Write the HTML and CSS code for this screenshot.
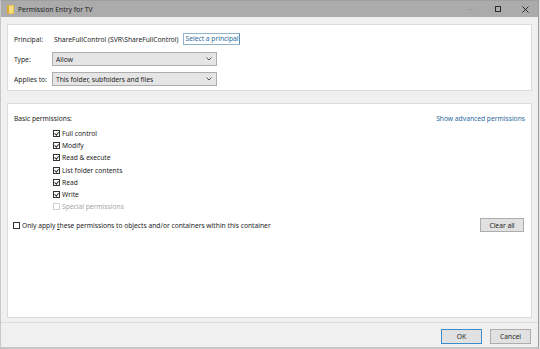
FILE: index.html
```html
<!DOCTYPE html>
<html lang="en">
<head>
  <meta charset="UTF-8" />
  <title>Permission Entry for TV</title>
  <link rel="stylesheet" href="styles.css">
</head>
<body>
  <div class="window">
    <div class="titlebar">
      <svg class="app-icon" width="7" height="9" viewBox="0 0 7 9" aria-hidden="true">
        <rect x="0" y="0" width="7" height="9" fill="#e8c252"/>
        <rect x="1" y="1" width="5" height="7" fill="#f6dc83"/>
        <rect x="0" y="0" width="2" height="9" fill="#d9a93a"/>
      </svg>
      <span class="title">Permission Entry for TV</span>
      <div class="controls">
        <span class="ctl ctl-min"></span>
        <span class="ctl ctl-max"></span>
        <svg class="ctl ctl-close" width="7" height="7" viewBox="0 0 7 7" aria-hidden="true">
          <path d="M0.5 0.5 L6.5 6.5 M6.5 0.5 L0.5 6.5" stroke="#2a2a2a" stroke-width="1"/>
        </svg>
      </div>
    </div>

    <div class="content">
      <section class="panel panel-head">
        <div class="row">
          <span class="label">Principal:</span>
          <span class="value">ShareFullControl (SVR\ShareFullControl)</span>
          <a class="link link-box">Select a principal</a>
        </div>
        <div class="row">
          <span class="label">Type:</span>
          <div class="select">
            <span>Allow</span>
            <svg class="chevron" width="6" height="4" viewBox="0 0 6 4" aria-hidden="true"><path d="M0.5 0.5 L3 3 L5.5 0.5" fill="none" stroke="#444" stroke-width="0.9"/></svg>
          </div>
        </div>
        <div class="row">
          <span class="label">Applies to:</span>
          <div class="select">
            <span>This folder, subfolders and files</span>
            <svg class="chevron" width="6" height="4" viewBox="0 0 6 4" aria-hidden="true"><path d="M0.5 0.5 L3 3 L5.5 0.5" fill="none" stroke="#444" stroke-width="0.9"/></svg>
          </div>
        </div>
      </section>

      <section class="panel panel-perms">
        <div class="perms-head">
          <span>Basic permissions:</span>
          <a class="link">Show advanced permissions</a>
        </div>
        <ul class="perm-list">
          <li><span class="box checked"></span><span>Full control</span></li>
          <li><span class="box checked"></span><span>Modify</span></li>
          <li><span class="box checked"></span><span>Read &amp; execute</span></li>
          <li><span class="box checked"></span><span>List folder contents</span></li>
          <li><span class="box checked"></span><span>Read</span></li>
          <li><span class="box checked"></span><span>Write</span></li>
          <li class="disabled"><span class="box"></span><span>Special permissions</span></li>
        </ul>
        <div class="apply-row">
          <span class="apply-label"><span class="box"></span><span>Only apply <u>t</u>hese permissions to objects and/or containers within this container</span></span>
          <button class="btn" type="button">Clear all</button>
        </div>
      </section>
    </div>

    <div class="footer">
      <button class="btn btn-default" type="button">OK</button>
      <button class="btn" type="button">Cancel</button>
    </div>
  </div>
</body>
</html>
```

FILE: styles.css
```css
:root {
  --color-window: #f0f0f0;
  --color-panel: #ffffff;
  --color-line: #dcdcdc;
  --color-text: #1e1e1e;
  --color-link: #2a6a9e;
  --font-ui: "Noto Sans", "Open Sans", sans-serif;
}

* {
  box-sizing: border-box;
}

body {
  margin: 0;
  background: #e6e6e6;
  font-family: var(--font-ui);
  font-size: 6.7px;
  color: var(--color-text);
}

.window {
  width: 539px;
  height: 349px;
  background: var(--color-window);
  border-left: 1px solid #c8c8c8;
  border-right: 1px solid #9c9c9c;
  border-bottom: 2px solid #c6c6c6;
  display: flex;
  flex-direction: column;
}

/* title bar */
.titlebar {
  height: 17px;
  flex: none;
  background: #ababab;
  border-top: 1px solid #9f9f9f;
  display: flex;
  align-items: center;
  padding-left: 6px;
}

.app-icon {
  flex: none;
  margin-top: 1px;
}

.title {
  margin-left: 4px;
  font-size: 6.8px;
  color: #1c1c1c;
}

.controls {
  margin-left: auto;
  display: flex;
  align-items: center;
  height: 100%;
}

.ctl {
  display: block;
}

.ctl-min {
  width: 5px;
  height: 1px;
  background: #9a9a9a;
  margin-right: 22px;
}

.ctl-max {
  width: 6px;
  height: 6px;
  border: 1px solid #2a2a2a;
  margin-right: 21px;
}

.ctl-close {
  margin-right: 9px;
}

/* content */
.content {
  flex: 1;
  display: flex;
  flex-direction: column;
  gap: 12px;
  padding: 7px 6px 4px 6px;
}

.panel {
  background: var(--color-panel);
  border: 1px solid var(--color-line);
}

.panel-head {
  height: 67px;
  padding: 7px 6px 4px;
  display: flex;
  flex-direction: column;
  gap: 6px;
}

.row {
  height: 14px;
  display: flex;
  align-items: center;
}

.label {
  width: 38px;
  flex: none;
}

.value {
  margin-left: 2px;
}

.link {
  color: var(--color-link);
  cursor: pointer;
}

.link-box {
  margin-left: 4px;
  height: 12px;
  line-height: 10px;
  padding: 0 0 0 2px;
  border: 1px solid #8fb3cf;
  border-right-color: #5f8fb5;
}

.select {
  width: 165px;
  height: 14px;
  background: #e5e5e5;
  border: 1px solid #adadad;
  display: flex;
  align-items: center;
  justify-content: space-between;
  padding: 0 4px 0 3px;
}

.panel-perms {
  flex: 1;
  padding: 10px 6px 0 6px;
}

.perms-head {
  display: flex;
  justify-content: space-between;
  line-height: 10px;
}

.perm-list {
  list-style: none;
  margin: 3px 0 0;
  padding: 0 0 0 39px;
}

.perm-list li {
  height: 12.3px;
  display: flex;
  align-items: center;
}

.box {
  width: 7px;
  height: 7px;
  border: 1px solid #333333;
  background: #ffffff;
  margin-right: 2px;
  flex: none;
  position: relative;
}

.box.checked::after {
  content: "";
  position: absolute;
  left: 1.3px;
  top: 0;
  width: 1.6px;
  height: 3.4px;
  border-right: 0.8px solid #2a2a2a;
  border-bottom: 0.8px solid #2a2a2a;
  transform: rotate(40deg);
}

.perm-list li.disabled {
  color: #a6a6a6;
}

.perm-list li.disabled .box {
  border-color: #d2d2d2;
}

.apply-row {
  margin-top: 5px;
  display: flex;
  align-items: center;
  justify-content: space-between;
}

.apply-label {
  display: flex;
  align-items: center;
  margin-left: -1px;
}

.btn {
  font-family: var(--font-ui);
  font-size: 6.7px;
  color: var(--color-text);
  background: #e1e1e1;
  border: 1px solid #adadad;
  height: 14px;
  width: 44px;
  padding: 0;
  margin: 0 1px 0 0;
}

/* footer */
.footer {
  height: 25px;
  flex: none;
  border-top: 1px solid var(--color-line);
  display: flex;
  justify-content: flex-end;
  gap: 8px;
  padding: 6px 7px 0 0;
}

.footer .btn {
  width: 41px;
  height: 15px;
  margin: 0;
}

.btn-default {
  border-color: #3d8ccb;
}
```
